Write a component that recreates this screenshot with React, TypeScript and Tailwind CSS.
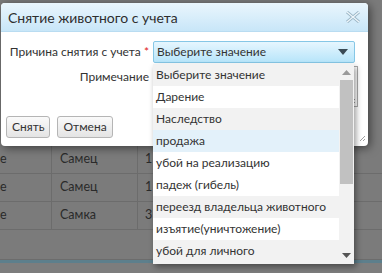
import React from "react";

const items = [
  { t: "Выберите значение", bg: "bg-[#f2f2f2]" },
  { t: "Дарение", bg: "bg-white" },
  { t: "Наследство", bg: "bg-[#f2f2f2]" },
  { t: "продажа", bg: "bg-[#e3f1fa]" },
  { t: "убой на реализацию", bg: "bg-white" },
  { t: "падеж (гибель)", bg: "bg-white" },
  { t: "переезд владельца животного", bg: "bg-[#f2f2f2]" },
  { t: "изъятие(уничтожение)", bg: "bg-white" },
  { t: "убой для личного", bg: "bg-[#f2f2f2]" },
];

function Grip({ className }: { className: string }) {
  return (
    <svg width="7" height="7" viewBox="0 0 7 7" className={className}>
      <path d="M1 6 L6 1 M4 6 L6 4" stroke="#a0a0a0" strokeWidth="1" fill="none" />
    </svg>
  );
}

export default function App() {
  const font = { fontFamily: 'Lato, "Noto Sans", sans-serif' };
  return (
    <div className="relative w-[382px] h-[273px] overflow-hidden bg-[#7b7b7b] whitespace-nowrap" style={font}>
      {/* background grid */}
      <div className="absolute left-0 top-[146px] w-full flex flex-col text-[12.5px] text-[#2a2a2a]">
        <div className="h-[28px] flex border-b border-[#6c6c6c]">
          <div className="w-[52px] border-r border-[#6c6c6c] flex items-center">е</div>
          <div className="w-[86px] border-r border-[#6c6c6c] flex items-center pl-[8px]">Самец</div>
          <div className="flex-1 flex items-center pl-[7px]">1</div>
        </div>
        <div className="h-[28px] flex border-b border-[#6c6c6c]">
          <div className="w-[52px] border-r border-[#6c6c6c] flex items-center">е</div>
          <div className="w-[86px] border-r border-[#6c6c6c] flex items-center pl-[8px]">Самец</div>
          <div className="flex-1 flex items-center pl-[7px]">1</div>
        </div>
        <div className="h-[28px] flex border-b border-[#6c6c6c]">
          <div className="w-[52px] border-r border-[#6c6c6c] flex items-center">е</div>
          <div className="w-[86px] border-r border-[#6c6c6c] flex items-center pl-[8px]">Самка</div>
          <div className="flex-1 flex items-center pl-[7px]">3</div>
        </div>
        <div className="h-[30px] border-b border-[#6c6c6c]" />
        <div className="h-[3px] bg-[#5d7f8c]" />
        <div className="h-[20px] bg-[#7d7d7d]" />
      </div>

      {/* dialog */}
      <div className="absolute left-[1px] top-[3px] w-[367px] h-[143px] bg-white rounded-[4px] shadow-[2px_2px_10px_rgba(0,0,0,0.5)] flex flex-col overflow-hidden">
        <div className="h-[29px] bg-gradient-to-b from-[#eaf6fd] to-[#c8e6f8] border-b border-[#b9dcf1] flex items-center justify-between pl-[7px] pr-[8px]">
          <span className="text-[14px] text-[#2e2e2e]">Снятие животного с учета</span>
          <svg width="14" height="12" viewBox="0 0 14 12">
            <path d="M1 1 L13 11 M13 1 L1 11" stroke="#9bb6c6" strokeWidth="3" fill="none" />
            <path d="M1 1 L13 11 M13 1 L1 11" stroke="#eef6fb" strokeWidth="1.2" fill="none" />
          </svg>
        </div>
        <div className="relative flex-1 flex flex-col pt-[9px] text-[12px] text-[#333]">
          <div className="flex items-center h-[22px]">
            <div className="w-[149px] shrink-0 text-right pr-[1px]">Причина снятия с учета <span className="text-[#e02020]">*</span></div>
            <div className="ml-[3px] w-[202px] h-[22px] rounded-[2px] border border-[#86c7e6] bg-gradient-to-b from-[#e6f6fe] to-[#b7e5fa] flex items-center justify-between pl-[3px] pr-[6px]">
              <span>Выберите значение</span>
              <svg width="10" height="6" viewBox="0 0 10 6"><path d="M0 0 H10 L5 6 Z" fill="#3a4a55" /></svg>
            </div>
          </div>
          <div className="flex items-start mt-[3px]">
            <div className="w-[149px] shrink-0 text-right pr-[1px] pt-[2px]">Примечание</div>
            <div className="ml-[3px] w-[205px] h-[41px] border border-[#aaa] relative">
              <Grip className="absolute right-[1px] bottom-[1px]" />
            </div>
          </div>
          <div className="flex gap-[7px] pl-[5px] mt-[9px]">
            <div className="h-[22px] px-[5px] border border-[#b5b5b5] rounded-[3px] bg-gradient-to-b from-[#fafafa] to-[#e4e4e4] flex items-center">Снять</div>
            <div className="h-[22px] px-[5px] border border-[#b5b5b5] rounded-[3px] bg-gradient-to-b from-[#fafafa] to-[#e4e4e4] flex items-center">Отмена</div>
          </div>
          <Grip className="absolute right-[2px] bottom-[4px]" />
        </div>
      </div>

      {/* dropdown list */}
      <div className="absolute left-[153px] top-[64px] w-[201px] h-[200px] bg-[#f2f2f2] shadow-[2px_3px_6px_rgba(0,0,0,0.4)] flex text-[12px] text-[#333]">
        <div className="flex-1 flex flex-col overflow-hidden">
          {items.map((it) => (
            <div key={it.t} className={`h-[22px] shrink-0 flex items-center pl-[3px] ${it.bg}`}>{it.t}</div>
          ))}
        </div>
        <div className="w-[15px] flex flex-col items-center bg-[#f2f2f2]">
          <svg width="9" height="14" viewBox="0 0 9 14" className="mt-[2px]"><path d="M0 9 H9 L4.5 4 Z" fill="#9a9a9a" /></svg>
          <div className="w-[13px] h-[104px] bg-[#c1c1c1]" />
          <div className="flex-1" />
          <svg width="9" height="14" viewBox="0 0 9 14" className="mb-[2px]"><path d="M0 5 H9 L4.5 10 Z" fill="#555" /></svg>
        </div>
      </div>
    </div>
  );
}
